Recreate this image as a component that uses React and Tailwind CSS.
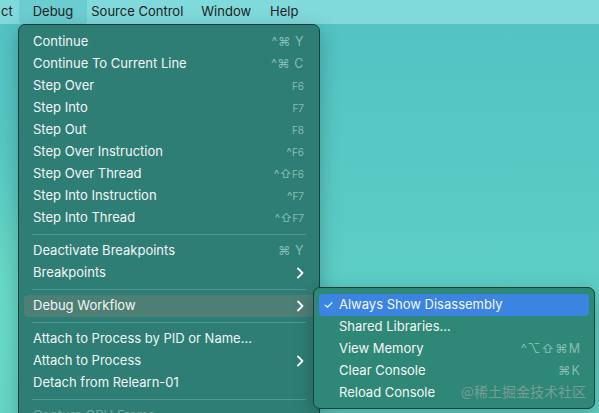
const font = { fontFamily: "Inter, 'Noto Sans', sans-serif" };

const mainItems = [
  { label: "Continue", sc: "^⌘ Y" },
  { label: "Continue To Current Line", sc: "^⌘ C" },
  { label: "Step Over", sc: "F6" },
  { label: "Step Into", sc: "F7" },
  { label: "Step Out", sc: "F8" },
  { label: "Step Over Instruction", sc: "^F6" },
  { label: "Step Over Thread", sc: "^⇧F6" },
  { label: "Step Into Instruction", sc: "^F7" },
  { label: "Step Into Thread", sc: "^⇧F7" },
  { sep: true },
  { label: "Deactivate Breakpoints", sc: "⌘ Y" },
  { label: "Breakpoints", sub: true },
  { sep: true },
  { label: "Debug Workflow", sub: true, active: true },
  { sep: true },
  { label: "Attach to Process by PID or Name..." },
  { label: "Attach to Process", sub: true },
  { label: "Detach from Relearn-01" },
  { sep: true },
  { label: "Capture GPU Frame", dim: true },
];

const subItems = [
  { label: "Always Show Disassembly", checked: true, active: true },
  { label: "Shared Libraries..." },
  { label: "View Memory", sc: "^⌥⇧⌘M" },
  { label: "Clear Console", sc: "⌘K" },
  { label: "Reload Console" },
];

function Chevron() {
  return (
    <svg width="8" height="12" viewBox="0 0 8 12" className="text-white">
      <path d="M2 1.5 L6.5 6 L2 10.5" fill="none" stroke="currentColor" strokeWidth="1.8" strokeLinecap="round" strokeLinejoin="round" />
    </svg>
  );
}

// function keys are drawn a size smaller than the modifier glyphs
function Shortcut({ sc }) {
  if (!sc) return null;
  const m = sc.match(/^([^A-Z]*)(F\d)$/);
  if (m) {
    return (
      <span className="flex items-baseline text-[#86bdb4]">
        <span className="text-[12px]">{m[1]}</span>
        <span className="text-[10px]">{m[2]}</span>
      </span>
    );
  }
  return <span className="text-[12.5px] text-[#86bdb4] tracking-[0.5px]">{sc}</span>;
}

function MainMenu() {
  return (
    <div className="absolute left-[18px] top-[24px] w-[302px] h-[420px] rounded-[7px] border border-[#16403a] bg-[#2e7e75] px-[5px] pt-[6px] shadow-[0_6px_20px_rgba(0,0,0,0.25)]">
      {mainItems.map((it, i) =>
        it.sep ? (
          <div key={i} className="h-[11px] flex items-center px-[8px]">
            <div className="h-px w-full bg-[#4f9a90]" />
          </div>
        ) : (
          <div
            key={i}
            className={`h-[22px] flex items-center justify-between pl-[9px] pr-[10px] rounded-[4px] ${
              it.active ? "bg-[#4e7f76]" : ""
            }`}
          >
            <span className={`text-[13px] ${it.dim ? "text-[#6fa69d]" : "text-[#f2f6f5]"}`}>{it.label}</span>
            {it.sub ? <Chevron /> : <Shortcut sc={it.sc} />}
          </div>
        )
      )}
    </div>
  );
}

function SubMenu() {
  return (
    <div className="absolute left-[313px] top-[287px] w-[282px] h-[122px] rounded-[7px] border border-[#16403a] bg-[#2f8877] px-[5px] pt-[6px] shadow-[0_6px_20px_rgba(0,0,0,0.25)]">
      {subItems.map((it, i) => (
        <div
          key={i}
          className={`h-[22px] flex items-center justify-between pl-[4px] pr-[8px] rounded-[4px] ${
            it.active ? "bg-[#3b84e2]" : ""
          }`}
        >
          <span className="flex items-center text-[13px] text-[#f4f7f6]">
            <span className="w-[16px] text-[12px]">{it.checked ? "✓" : ""}</span>
            {it.label}
          </span>
          {it.sc && <span className="text-[12.5px] text-[#86bdb4] tracking-[1px]">{it.sc}</span>}
        </div>
      ))}
      <div className="absolute right-[8px] bottom-[6px] text-[14px] text-[#9aa6a3]/70" style={{ fontFamily: "'Noto Sans CJK SC', sans-serif" }}>
        @稀土掘金技术社区
      </div>
    </div>
  );
}

export default function App() {
  return (
    <div className="relative w-full h-[413px] overflow-hidden bg-gradient-to-b from-[#52c2c3] to-[#62d3c6]" style={font}>
      <div className="absolute -left-[60px] bottom-0 w-[200px] h-[200px] rounded-full bg-[#6ee0c8] blur-2xl opacity-70" />
      <div className="relative h-[24px] bg-[#80d9db] flex items-center text-[13px] text-[#1b1f1f]">
        <span className="pl-[1px] pr-[6px]">ct</span>
        <span className="h-full flex items-center px-[14px] bg-[#6ccdd0] rounded-b-[4px]">Debug</span>
        <span className="px-[10px] ml-[-6px]">Source Control</span>
        <span className="px-[10px] ml-[-2px]">Window</span>
        <span className="px-[10px] ml-[-1px]">Help</span>
      </div>
      <MainMenu />
      <SubMenu />
    </div>
  );
}
